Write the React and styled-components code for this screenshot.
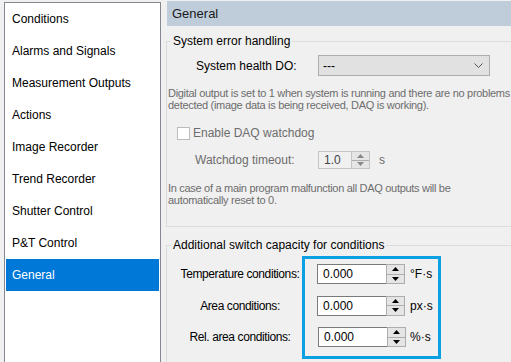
import React from 'react';
import styled, { createGlobalStyle } from 'styled-components';

const GlobalStyle = createGlobalStyle`
  html, body {
    margin: 0;
    padding: 0;
    background: #f0f0f0;
    font-family: "Liberation Sans", Arial, sans-serif;
    font-size: 12px;
    color: #000;
  }
`;

const Window = styled.div`
  display: flex;
  width: 511px;
  height: 362px;
  overflow: hidden;
  background: #f0f0f0;
`;

// ---- left navigation list
const NavList = styled.ul`
  list-style: none;
  margin: 2px 0 0 4px;
  padding: 0 1px;
  width: 153px;
  flex-shrink: 0;
  height: 400px;
  background: #fff;
  border: 1px solid #828790;
  border-bottom: none;
`;

const NavItem = styled.li`
  height: 32px;
  line-height: 32px;
  padding-left: 6px;
  background: ${p => (p.selected ? '#0078d7' : 'transparent')};
  color: ${p => (p.selected ? '#fff' : '#000')};
  white-space: nowrap;
`;

// ---- right content
const Content = styled.div`
  flex: 1;
  display: flex;
  flex-direction: column;
  margin-left: 6px;
  min-width: 0;
`;

const Header = styled.div`
  margin-top: 1px;
  height: 26px;
  line-height: 25px;
  padding-left: 5px;
  background: #bfcddb;
  font-size: 13px;
  color: #1a1a1a;
`;

const Group = styled.fieldset`
  margin: ${p => p.top}px -20px 0 -1px;
  padding: 0 0 ${p => p.bottom || 0}px 0;
  border: 1px solid #dcdcdc;
  min-width: 0;
`;

const Legend = styled.legend`
  margin-left: 4px;
  padding: 0 2px;
  line-height: 14px;
  font-size: 12px;
`;

const FieldRow = styled.div`
  display: flex;
  align-items: center;
  margin-top: ${p => p.top || 0}px;
  color: ${p => (p.disabled ? '#6d6d6d' : '#000')};
`;

const FieldLabel = styled.span`
  box-sizing: border-box;
  width: ${p => p.width}px;
  padding-left: ${p => p.indent}px;
  flex-shrink: 0;
  white-space: nowrap;
`;

const Select = styled.div`
  box-sizing: border-box;
  width: 172px;
  height: 21px;
  border: 1px solid #adadad;
  background: #e1e1e1;
  display: flex;
  align-items: center;
  justify-content: space-between;
  padding: 0 6px 0 4px;
`;

const Note = styled.p`
  margin: ${p => p.top}px 0 0 1px;
  font-size: 11px;
  letter-spacing: -0.3px;
  line-height: 12px;
  color: #6d6d6d;
  white-space: pre-line;
`;

const CheckRow = styled.label`
  display: flex;
  align-items: center;
  gap: 3px;
  margin: ${p => p.top}px 0 0 10px;
  color: #6d6d6d;
`;

const CheckBox = styled.span`
  width: 11px;
  height: 11px;
  border: 1px solid #bcbcbc;
  background: #fff;
`;

const Spin = styled.div`
  display: flex;
  width: ${p => p.width}px;
  height: ${p => p.height}px;
  margin-left: ${p => p.shift || 0}px;
`;

const SpinText = styled.div`
  flex: 1;
  border: 1px solid ${p => (p.disabled ? '#c4c4c4' : '#7a7a7a')};
  border-right: none;
  background: ${p => (p.disabled ? '#f0f0f0' : '#fff')};
  color: ${p => (p.disabled ? '#444' : '#000')};
  padding-left: 5px;
  display: flex;
  align-items: center;
`;

const SpinButtons = styled.div`
  width: 17px;
  display: flex;
  flex-direction: column;
  border: 1px solid ${p => (p.disabled ? '#c4c4c4' : '#adadad')};
  background: #e5e5e5;
`;

const SpinHalf = styled.div`
  flex: 1;
  display: flex;
  align-items: center;
  justify-content: center;
  & + & {
    border-top: 1px solid ${p => (p.disabled ? '#cfcfcf' : '#adadad')};
  }
`;

const Unit = styled.span`
  margin-left: ${p => p.gap}px;
  color: ${p => (p.disabled ? '#6d6d6d' : '#000')};
  white-space: nowrap;
`;

const CapacityArea = styled.div`
  display: flex;
  margin-top: 4px;
`;

const LabelColumn = styled.div`
  width: 124px;
  margin-left: 11px;
  padding-top: 8px;
  display: flex;
  flex-direction: column;
`;

const CenterLabel = styled.div`
  height: 31.5px;
  line-height: 20px;
  display: flex;
  justify-content: center;
  white-space: nowrap;
  letter-spacing: -0.4px;
`;

const Highlight = styled.div`
  width: 121px;
  border: 3px solid #0aa0e2;
  padding: 5px 0 9px 12px;
  display: flex;
  flex-direction: column;
  gap: 11.5px;
`;

const SpinLine = styled.div`
  display: flex;
  align-items: center;
  height: 20px;
`;

const Arrow = ({ up, color = '#000' }) => (
  <svg width="7" height="4" viewBox="0 0 7 4">
    <polygon points={up ? '0,4 7,4 3.5,0' : '0,0 7,0 3.5,4'} fill={color} />
  </svg>
);

const Chevron = () => (
  <svg width="9" height="5" viewBox="0 0 9 5">
    <polyline points="0.5,0.5 4.5,4.5 8.5,0.5" fill="none" stroke="#555" strokeWidth="1" />
  </svg>
);

const SpinBox = ({ value, width, height, disabled, shift }) => (
  <Spin width={width} height={height} shift={shift}>
    <SpinText disabled={disabled}>{value}</SpinText>
    <SpinButtons disabled={disabled}>
      <SpinHalf disabled={disabled}>
        <Arrow up color={disabled ? '#888' : '#000'} />
      </SpinHalf>
      <SpinHalf disabled={disabled}>
        <Arrow color={disabled ? '#888' : '#000'} />
      </SpinHalf>
    </SpinButtons>
  </Spin>
);

const navItems = [
  'Conditions',
  'Alarms and Signals',
  'Measurement Outputs',
  'Actions',
  'Image Recorder',
  'Trend Recorder',
  'Shutter Control',
  'P&T Control',
  'General',
];

const capacities = [
  { label: 'Temperature conditions:', unit: '°F·s' },
  { label: 'Area conditions:', unit: 'px·s' },
  { label: 'Rel. area conditions:', unit: '%·s', shift: 1 },
];

export default function App() {
  return (
    <>
      <GlobalStyle />
      <Window>
        <NavList>
          {navItems.map(item => (
            <NavItem key={item} selected={item === 'General'}>
              {item}
            </NavItem>
          ))}
        </NavList>

        <Content>
          <Header>General</Header>

          <Group top={8} bottom={20}>
            <Legend>System error handling</Legend>
            <FieldRow top={7}>
              <FieldLabel indent={29} width={151}>System health DO:</FieldLabel>
              <Select>
                <span>---</span>
                <Chevron />
              </Select>
            </FieldRow>
            <Note top={11}>
              {'Digital output is set to 1 when system is running and there are no problems\ndetected (image data is being received, DAQ is working).'}
            </Note>
            <CheckRow top={15}>
              <CheckBox />
              Enable DAQ watchdog
            </CheckRow>
            <FieldRow top={11} disabled>
              <FieldLabel indent={28} width={151}>Watchdog timeout:</FieldLabel>
              <SpinBox value="1.0" width={52} height={18} disabled />
              <Unit gap={9} disabled>s</Unit>
            </FieldRow>
            <Note top={13}>
              {'In case of a main program malfunction all DAQ outputs will be\nautomatically reset to 0.'}
            </Note>
          </Group>

          <Group top={11} bottom={40}>
            <Legend>Additional switch capacity for conditions</Legend>
            <CapacityArea>
              <LabelColumn>
                {capacities.map(c => (
                  <CenterLabel key={c.label}>{c.label}</CenterLabel>
                ))}
              </LabelColumn>
              <Highlight>
                {capacities.map(c => (
                  <SpinLine key={c.label}>
                    <SpinBox value="0.000" width={88} height={20} shift={c.shift} />
                    <Unit gap={c.shift ? 4 : 5}>{c.unit}</Unit>
                  </SpinLine>
                ))}
              </Highlight>
            </CapacityArea>
          </Group>
        </Content>
      </Window>
    </>
  );
}
